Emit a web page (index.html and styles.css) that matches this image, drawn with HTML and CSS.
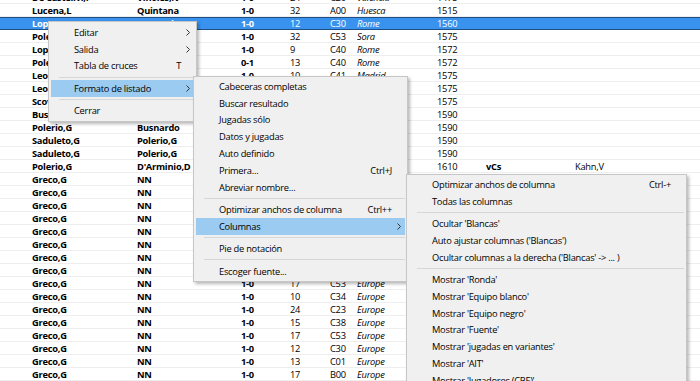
FILE: index.html
```html
<!DOCTYPE html>
<html lang="es">
<head>
<meta charset="utf-8">
<title>Listado</title>
<link rel="stylesheet" href="styles.css">
</head>
<body>
<div class="screen">
  <div class="table">
    <div class="row"><span></span><span class="b">De Castellvi,F</span><span class="b">Vinoles,N</span><span class="b">1-0</span><span>24</span><span>C20</span><span class="i">Valencia</span><span>1475</span><span></span><span></span></div>
    <div class="row"><span></span><span class="b">Lucena,L</span><span class="b">Quintana</span><span class="b">1-0</span><span>32</span><span>A00</span><span class="i">Huesca</span><span>1515</span><span></span><span></span></div>
    <div class="row sel"><span></span><span class="b">Lopez,R</span><span class="b">Leonardo,G</span><span class="b">1-0</span><span>12</span><span>C30</span><span class="i">Rome</span><span>1560</span><span></span><span></span></div>
    <div class="row"><span></span><span class="b">Polerio,G</span><span class="b">Lopez,R</span><span class="b">1-0</span><span>32</span><span>C53</span><span class="i">Sora</span><span>1575</span><span></span><span></span></div>
    <div class="row"><span></span><span class="b">Lopez,R</span><span class="b">Leonardo,G</span><span class="b">1-0</span><span>9</span><span>C40</span><span class="i">Rome</span><span>1572</span><span></span><span></span></div>
    <div class="row"><span></span><span class="b">Polerio,G</span><span class="b">Lopez,R</span><span class="b">0-1</span><span>13</span><span>C40</span><span class="i">Rome</span><span>1572</span><span></span><span></span></div>
    <div class="row"><span></span><span class="b">Leonardo,G</span><span class="b">Lopez,R</span><span class="b">1-0</span><span>10</span><span>C41</span><span class="i">Madrid</span><span>1575</span><span></span><span></span></div>
    <div class="row"><span></span><span class="b">Leonardo,G</span><span class="b">Lopez,R</span><span class="b">1-0</span><span>20</span><span>C30</span><span class="i">Madrid</span><span>1575</span><span></span><span></span></div>
    <div class="row"><span></span><span class="b">Scovara,M</span><span class="b">Leonardo,G</span><span class="b">1-0</span><span>18</span><span>C44</span><span class="i">Naples</span><span>1575</span><span></span><span></span></div>
    <div class="row"><span></span><span class="b">Busnardo</span><span class="b">Polerio,G</span><span class="b">0-1</span><span>21</span><span>C57</span><span class="i">Rome</span><span>1590</span><span></span><span></span></div>
    <div class="row"><span></span><span class="b">Polerio,G</span><span class="b">Busnardo</span><span class="b">1-0</span><span>16</span><span>C50</span><span class="i">Rome</span><span>1590</span><span></span><span></span></div>
    <div class="row"><span></span><span class="b">Saduleto,G</span><span class="b">Polerio,G</span><span class="b">0-1</span><span>19</span><span>C37</span><span class="i">Rome</span><span>1590</span><span></span><span></span></div>
    <div class="row"><span></span><span class="b">Saduleto,G</span><span class="b">Polerio,G</span><span class="b">0-1</span><span>14</span><span>C39</span><span class="i">Rome</span><span>1590</span><span></span><span></span></div>
    <div class="row"><span></span><span class="b">Polerio,G</span><span class="b">D'Arminio,D</span><span class="b">1-0</span><span>22</span><span>C33</span><span class="i">Rome</span><span>1610</span><span class="b">vCs</span><span>Kahn,V</span></div>
    <div class="row"><span></span><span class="b">Greco,G</span><span class="b">NN</span><span class="b">1-0</span><span>11</span><span>C50</span><span class="i">Europe</span><span>1620</span><span></span><span></span></div>
    <div class="row"><span></span><span class="b">Greco,G</span><span class="b">NN</span><span class="b">1-0</span><span>14</span><span>C50</span><span class="i">Europe</span><span>1620</span><span></span><span></span></div>
    <div class="row"><span></span><span class="b">Greco,G</span><span class="b">NN</span><span class="b">1-0</span><span>16</span><span>C51</span><span class="i">Europe</span><span>1620</span><span></span><span></span></div>
    <div class="row"><span></span><span class="b">Greco,G</span><span class="b">NN</span><span class="b">1-0</span><span>12</span><span>C53</span><span class="i">Europe</span><span>1620</span><span></span><span></span></div>
    <div class="row"><span></span><span class="b">Greco,G</span><span class="b">NN</span><span class="b">1-0</span><span>19</span><span>C54</span><span class="i">Europe</span><span>1620</span><span></span><span></span></div>
    <div class="row"><span></span><span class="b">Greco,G</span><span class="b">NN</span><span class="b">1-0</span><span>22</span><span>C57</span><span class="i">Europe</span><span>1620</span><span></span><span></span></div>
    <div class="row"><span></span><span class="b">Greco,G</span><span class="b">NN</span><span class="b">1-0</span><span>9</span><span>C41</span><span class="i">Europe</span><span>1620</span><span></span><span></span></div>
    <div class="row"><span></span><span class="b">Greco,G</span><span class="b">NN</span><span class="b">1-0</span><span>15</span><span>C30</span><span class="i">Europe</span><span>1620</span><span></span><span></span></div>
    <div class="row"><span></span><span class="b">Greco,G</span><span class="b">NN</span><span class="b">1-0</span><span>17</span><span>C53</span><span class="i">Europe</span><span>1620</span><span></span><span></span></div>
    <div class="row"><span></span><span class="b">Greco,G</span><span class="b">NN</span><span class="b">1-0</span><span>10</span><span>C34</span><span class="i">Europe</span><span>1620</span><span></span><span></span></div>
    <div class="row"><span></span><span class="b">Greco,G</span><span class="b">NN</span><span class="b">1-0</span><span>24</span><span>C23</span><span class="i">Europe</span><span>1620</span><span></span><span></span></div>
    <div class="row"><span></span><span class="b">Greco,G</span><span class="b">NN</span><span class="b">1-0</span><span>15</span><span>C38</span><span class="i">Europe</span><span>1620</span><span></span><span></span></div>
    <div class="row"><span></span><span class="b">Greco,G</span><span class="b">NN</span><span class="b">1-0</span><span>17</span><span>C53</span><span class="i">Europe</span><span>1620</span><span></span><span></span></div>
    <div class="row"><span></span><span class="b">Greco,G</span><span class="b">NN</span><span class="b">1-0</span><span>12</span><span>C30</span><span class="i">Europe</span><span>1620</span><span></span><span></span></div>
    <div class="row"><span></span><span class="b">Greco,G</span><span class="b">NN</span><span class="b">1-0</span><span>13</span><span>C01</span><span class="i">Europe</span><span>1620</span><span></span><span></span></div>
    <div class="row"><span></span><span class="b">Greco,G</span><span class="b">NN</span><span class="b">1-0</span><span>17</span><span>B00</span><span class="i">Europe</span><span>1620</span><span></span><span></span></div>
  </div>

  <div class="menu m1">
    <div class="item"><span>Editar</span><span class="key"></span><span class="arr"><svg width="4" height="7" viewBox="0 0 4 7"><path d="M0.5 0.5 L3.5 3.5 L0.5 6.5" fill="none" stroke="#333" stroke-width="1"/></svg></span></div>
    <div class="item"><span>Salida</span><span class="key"></span><span class="arr"><svg width="4" height="7" viewBox="0 0 4 7"><path d="M0.5 0.5 L3.5 3.5 L0.5 6.5" fill="none" stroke="#333" stroke-width="1"/></svg></span></div>
    <div class="item"><span>Tabla de cruces</span><span class="key">T</span><span class="arr"></span></div>
    <div class="sep"></div>
    <div class="item hl"><span>Formato de listado</span><span class="key"></span><span class="arr"><svg width="4" height="7" viewBox="0 0 4 7"><path d="M0.5 0.5 L3.5 3.5 L0.5 6.5" fill="none" stroke="#333" stroke-width="1"/></svg></span></div>
    <div class="sep"></div>
    <div class="item"><span>Cerrar</span><span class="key"></span><span class="arr"></span></div>
  </div>

  <div class="menu m2">
    <div class="item"><span>Cabeceras completas</span><span class="key"></span><span class="arr"></span></div>
    <div class="item"><span>Buscar resultado</span><span class="key"></span><span class="arr"></span></div>
    <div class="item"><span>Jugadas sólo</span><span class="key"></span><span class="arr"></span></div>
    <div class="item"><span>Datos y jugadas</span><span class="key"></span><span class="arr"></span></div>
    <div class="item"><span>Auto definido</span><span class="key"></span><span class="arr"></span></div>
    <div class="item"><span>Primera...</span><span class="key">Ctrl+J</span><span class="arr"></span></div>
    <div class="item"><span>Abreviar nombre...</span><span class="key"></span><span class="arr"></span></div>
    <div class="sep"></div>
    <div class="item"><span>Optimizar anchos de columna</span><span class="key">Ctrl++</span><span class="arr"></span></div>
    <div class="item hl"><span>Columnas</span><span class="key"></span><span class="arr"><svg width="4" height="7" viewBox="0 0 4 7"><path d="M0.5 0.5 L3.5 3.5 L0.5 6.5" fill="none" stroke="#333" stroke-width="1"/></svg></span></div>
    <div class="sep"></div>
    <div class="item"><span>Pie de notación</span><span class="key"></span><span class="arr"></span></div>
    <div class="sep"></div>
    <div class="item"><span>Escoger fuente...</span><span class="key"></span><span class="arr"></span></div>
  </div>

  <div class="menu m3">
    <div class="item"><span>Optimizar anchos de columna</span><span class="key">Ctrl-+</span><span class="arr"></span></div>
    <div class="item"><span>Todas las columnas</span><span class="key"></span><span class="arr"></span></div>
    <div class="sep"></div>
    <div class="item"><span>Ocultar 'Blancas'</span><span class="key"></span><span class="arr"></span></div>
    <div class="item"><span>Auto ajustar columnas ('Blancas')</span><span class="key"></span><span class="arr"></span></div>
    <div class="item"><span>Ocultar columnas a la derecha ('Blancas' -&gt; ... )</span><span class="key"></span><span class="arr"></span></div>
    <div class="sep"></div>
    <div class="item"><span>Mostrar 'Ronda'</span><span class="key"></span><span class="arr"></span></div>
    <div class="item"><span>Mostrar 'Equipo blanco'</span><span class="key"></span><span class="arr"></span></div>
    <div class="item"><span>Mostrar 'Equipo negro'</span><span class="key"></span><span class="arr"></span></div>
    <div class="item"><span>Mostrar 'Fuente'</span><span class="key"></span><span class="arr"></span></div>
    <div class="item"><span>Mostrar 'jugadas en variantes'</span><span class="key"></span><span class="arr"></span></div>
    <div class="item"><span>Mostrar 'AIT'</span><span class="key"></span><span class="arr"></span></div>
    <div class="item"><span>Mostrar 'Jugadores (CBF)'</span><span class="key"></span><span class="arr"></span></div>
    <div class="item"><span>Mostrar 'Torneo (CBF)'</span><span class="key"></span><span class="arr"></span></div>
  </div>
</div>
</body>
</html>
```

FILE: styles.css
```css
* { box-sizing: border-box; }
body {
  margin: 0;
  background: #ffffff;
  font-family: "Open Sans", "Noto Sans", sans-serif;
  font-size: 9.3px;
  letter-spacing: -0.25px;
  color: #000;
}
.screen {
  position: relative;
  width: 700px;
  height: 381px;
  overflow: hidden;
}
.table { margin-top: -9px; }
.row {
  display: grid;
  grid-template-columns: 32px 105px 104px 49px 40px 27px 80px 49px 89px 1fr;
  height: 13px;
  line-height: 13px;
  border-bottom: 1px solid #eeeeee;
  white-space: nowrap;
}
.row span { overflow: hidden; }
.b { font-weight: bold; }
.i { font-style: italic; }
.row.sel {
  background: #3992ee;
  color: #fff;
  border-top: 1px solid #1f4e82;
  border-bottom: 1px solid #1f4e82;
  line-height: 11px;
}

.menu {
  position: absolute;
  background: #f0f0f0;
  border: 1px solid #c6c6c6;
  box-shadow: 2px 2px 3px rgba(0, 0, 0, 0.28);
  padding: 1px 0;
  white-space: nowrap;
}
.m1 { left: 48px; top: 21px; width: 149px; padding: 2px 0; }
.m2 { left: 193px; top: 76px; width: 215px; }
.m3 { left: 406px; top: 174px; width: 281px; }

.item {
  display: grid;
  grid-template-columns: 1fr auto 12px;
  align-items: center;
  height: 16.8px;
  margin: 0 2px;
  padding-left: 23px;
}
.item.hl { background: #9bcbf0; }
.key { padding-right: 1px; }
.arr { display: flex; align-items: center; padding-left: 4px; }
.arr svg { display: block; }
.sep {
  height: 1px;
  background: #d6d6d6;
  margin: 2.3px 2px 2.3px 10px;
}
```
